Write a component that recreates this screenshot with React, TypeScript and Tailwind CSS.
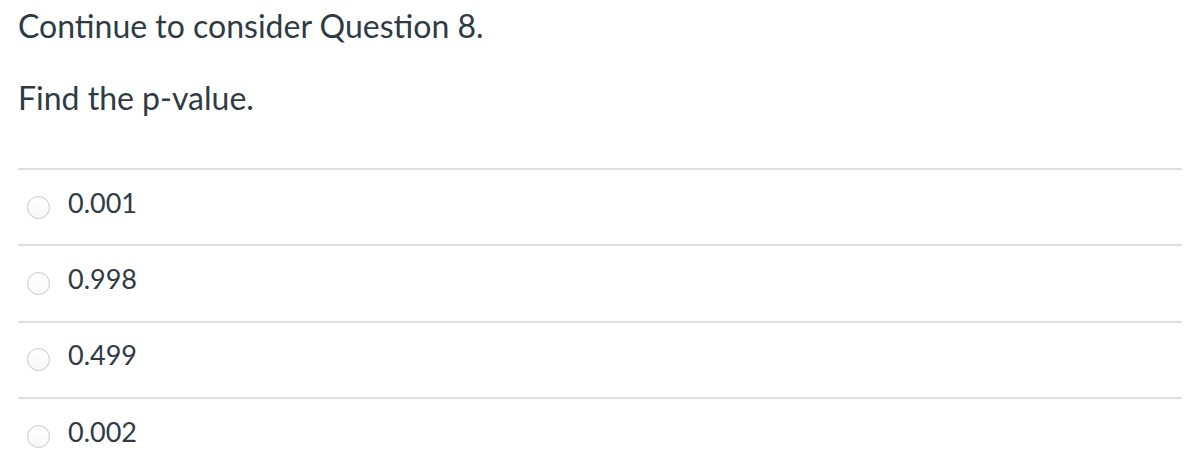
import React from "react";

const options = ["0.001", "0.998", "0.499", "0.002"];

export default function App() {
  return (
    <div className="w-[1192px] h-[464px] bg-white overflow-hidden text-[#2d3b45]" style={{ fontFamily: "Lato, 'Liberation Sans', sans-serif" }}>
      <div className="pl-[18px] pr-[10px] pt-[6px]">
        <p className="text-[32px] leading-[40px]">Continue to consider Question 8.</p>
        <p className="text-[32px] leading-[40px] mt-[32px]">Find the p-value.</p>
        <div className="mt-[50px]">
          {options.map((o) => (
            <div key={o} className="border-t-2 border-[#dedede] h-[76.3px] flex items-center">
              <span className="ml-[9px] w-[23px] h-[23px] rounded-full border border-[#c8c8c8] bg-gradient-to-b from-white to-[#f8f8f8]" />
              <span className="ml-[18px] text-[27px] pb-[8px]">{o}</span>
            </div>
          ))}
        </div>
      </div>
    </div>
  );
}
